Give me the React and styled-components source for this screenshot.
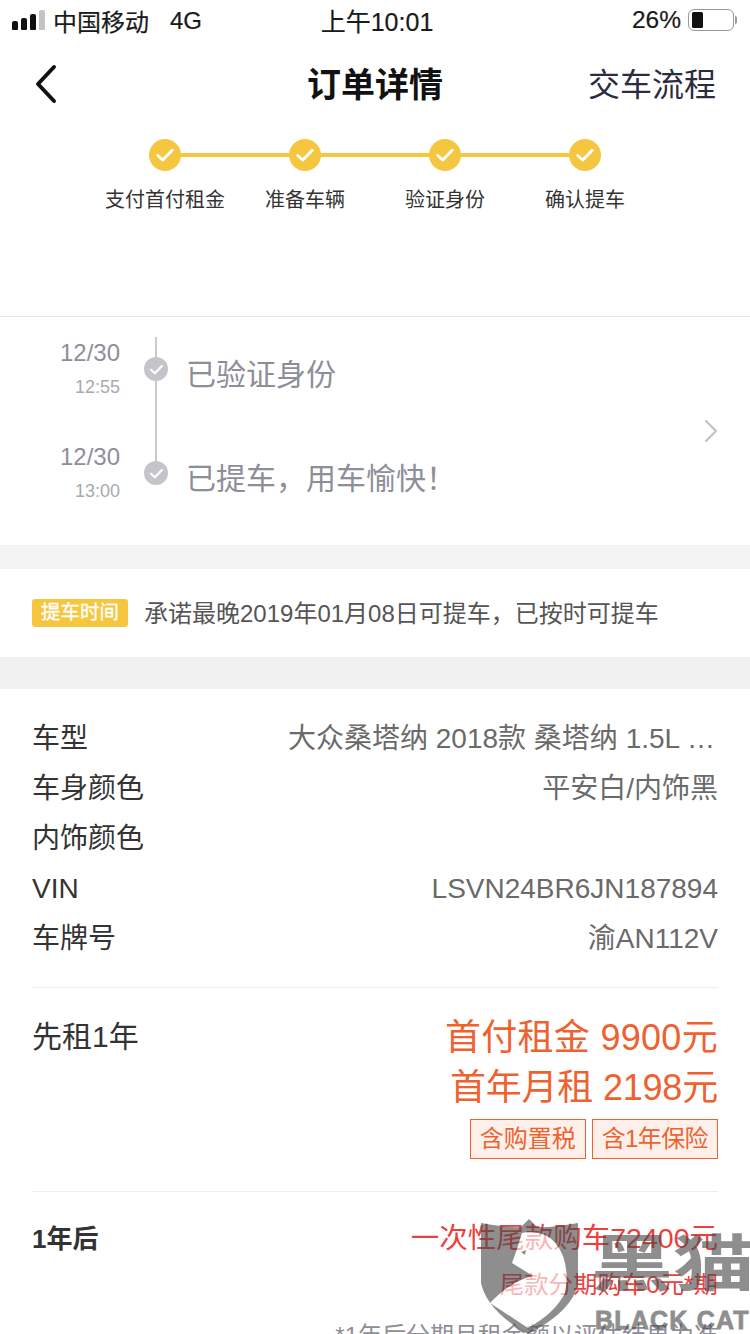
import React from "react";
import styled, { createGlobalStyle } from "styled-components";

const GlobalStyle = createGlobalStyle`
  html, body {
    margin: 0;
    padding: 0;
    background: #fff;
    font-family: "Liberation Sans", "Noto Sans CJK SC", sans-serif;
  }
`;

const STEPS = ["支付首付租金", "准备车辆", "验证身份", "确认提车"];

const TIMELINE = [
  { date: "12/30", time: "12:55", text: "已验证身份" },
  { date: "12/30", time: "13:00", text: "已提车，用车愉快！" },
];

const CAR_INFO = [
  { label: "车型", value: "大众桑塔纳 2018款 桑塔纳 1.5L 手动风尚版" },
  { label: "车身颜色", value: "平安白/内饰黑" },
  { label: "内饰颜色", value: "" },
  { label: "VIN", value: "LSVN24BR6JN187894" },
  { label: "车牌号", value: "渝AN112V" },
];

function CheckMark({ size }) {
  return (
    <svg width={size} height={size} viewBox="0 0 16 16" fill="none">
      <path d="M2.2 8.4 L6.2 12 L13.8 4.2" stroke="#fff" strokeWidth="2.4" strokeLinecap="round" strokeLinejoin="round" />
    </svg>
  );
}

export default function App() {
  return (
    <Page>
      <GlobalStyle />
      <StatusBar>
        <StatusLeft>
          <Signal>
            <Bar $h={9} />
            <Bar $h={12} />
            <Bar $h={16} />
            <Bar $h={20} $off />
          </Signal>
          <span>中国移动</span>
          <NetType>4G</NetType>
        </StatusLeft>
        <StatusTime>上午10:01</StatusTime>
        <StatusRight>
          <span>26%</span>
          <Battery>
            <BatteryFill />
          </Battery>
          <BatteryCap />
        </StatusRight>
      </StatusBar>

      <NavBar>
        <BackIcon width="26" height="40" viewBox="0 0 26 40" fill="none">
          <path d="M21 3 L5 20 L21 37" stroke="#111" strokeWidth="4" strokeLinecap="round" strokeLinejoin="round" />
        </BackIcon>
        <NavTitle>订单详情</NavTitle>
        <NavAction>交车流程</NavAction>
      </NavBar>

      <Steps>
        {STEPS.map((label, i) => (
          <Step key={label}>
            <StepDot $first={i === 0} $last={i === STEPS.length - 1}>
              <Dot>
                <CheckMark size={20} />
              </Dot>
            </StepDot>
            <StepLabel>{label}</StepLabel>
          </Step>
        ))}
      </Steps>

      <TimelineSection>
        <TimelineList>
          {TIMELINE.map((item, i) => (
            <TimelineRow key={item.time}>
              <TimeCol>
                <DateText>{item.date}</DateText>
                <TimeText>{item.time}</TimeText>
              </TimeCol>
              <Rail $last={i === TIMELINE.length - 1}>
                <RailDot>
                  <CheckMark size={15} />
                </RailDot>
              </Rail>
              <TimelineText>{item.text}</TimelineText>
            </TimelineRow>
          ))}
        </TimelineList>
        <Chevron width="14" height="24" viewBox="0 0 14 24" fill="none">
          <path d="M2 2 L12 12 L2 22" stroke="#c4c4ca" strokeWidth="2.4" strokeLinecap="round" strokeLinejoin="round" />
        </Chevron>
      </TimelineSection>

      <Gap $h={24} $bg="#f4f4f4" />

      <PickupRow>
        <PickupTag>提车时间</PickupTag>
        <PickupText>承诺最晚2019年01月08日可提车，已按时可提车</PickupText>
      </PickupRow>

      <Gap $h={32} $bg="#f1f1f1" />

      <InfoList>
        {CAR_INFO.map((row) => (
          <InfoRow key={row.label}>
            <InfoLabel>{row.label}</InfoLabel>
            <InfoValue>{row.value}</InfoValue>
          </InfoRow>
        ))}
      </InfoList>

      <PlanSection>
        <PlanTitle>先租1年</PlanTitle>
        <PlanRight>
          <PriceLine $spacing={0.3}>首付租金 9900元</PriceLine>
          <PriceLine $spacing={-0.2}>首年月租 2198元</PriceLine>
          <Tags>
            <Tag>含购置税</Tag>
            <Tag $tight>含1年保险</Tag>
          </Tags>
        </PlanRight>
      </PlanSection>

      <AfterSection>
        <AfterHead>
          <AfterTitle>1年后</AfterTitle>
          <AfterRight>
            <AfterPrice>一次性尾款购车72400元</AfterPrice>
            <AfterInstall>尾款分期购车0元*期</AfterInstall>
          </AfterRight>
        </AfterHead>
        <AfterNote>*1年后分期月租金额以评估结果为准</AfterNote>
      </AfterSection>

      <Watermark>
        <svg width="97" height="115" viewBox="0 0 97 115">
          <path d="M0 4 Q28 9 40 8 L48 0 L56 8 Q70 9 97 4 L97 64 Q92 92 47 115 Q6 92 0 64 Z" fill="#4a4a4a" />
          <path d="M41 14 L36 30 L31 44 L52 57 Q30 62 9 84 L47 109 Q74 94 84 74 Q88 54 82 37 Q76 22 64 16 Q52 11 41 14 Z" fill="#fff" />
          <path d="M40 33 L45 31 L44 36 Z" fill="#4a4a4a" />
        </svg>
        <WatermarkText>
          <WatermarkCn>黑猫</WatermarkCn>
          <WatermarkEn>BLACK CAT</WatermarkEn>
        </WatermarkText>
      </Watermark>
    </Page>
  );
}

const Page = styled.div`
  position: relative;
  width: 750px;
  height: 1334px;
  overflow: hidden;
  background: #fff;
`;

const StatusBar = styled.div`
  display: grid;
  grid-template-columns: 1fr auto 1fr;
  align-items: center;
  height: 40px;
  font-size: 24px;
  color: #1a1a1a;
  -webkit-text-stroke: 0.2px #1a1a1a;
`;

const StatusLeft = styled.div`
  display: flex;
  align-items: center;
  padding-left: 12px;
`;

const Signal = styled.div`
  display: flex;
  align-items: flex-end;
  gap: 3px;
  height: 20px;
  margin-right: 8px;
`;

const Bar = styled.i`
  display: block;
  width: 6px;
  height: ${(p) => p.$h}px;
  border-radius: 2px 2px 1px 1px;
  background: ${(p) => (p.$off ? "#c4c4c4" : "#111")};
`;

const NetType = styled.span`
  margin-left: 21px;
  padding-top: 2px;
`;

const StatusTime = styled.div`
  padding-left: 4px;
  text-align: center;
  font-size: 25px;
`;

const StatusRight = styled.div`
  display: flex;
  align-items: center;
  justify-content: flex-end;
  padding-right: 13px;
  font-size: 24.5px;
`;

const Battery = styled.div`
  box-sizing: border-box;
  width: 46px;
  height: 22px;
  margin-left: 7px;
  padding: 2px 3px;
  border: 1.5px solid #999;
  border-radius: 6px;
`;

const BatteryFill = styled.div`
  width: 11px;
  height: 100%;
  border-radius: 1.5px;
  background: #111;
`;

const BatteryCap = styled.div`
  width: 2px;
  height: 8px;
  margin-left: 1px;
  background: #999;
  border-radius: 0 2px 2px 0;
`;

const NavBar = styled.div`
  position: relative;
  display: flex;
  align-items: center;
  justify-content: space-between;
  height: 88px;
  padding: 0 34px 0 33px;
`;

const BackIcon = styled.svg`
  display: block;
`;

const NavTitle = styled.div`
  position: absolute;
  left: 0;
  right: 0;
  padding-bottom: 4px;
  text-align: center;
  font-size: 34px;
  font-weight: 700;
  color: #111;
  pointer-events: none;
`;

const NavAction = styled.div`
  padding-bottom: 4px;
  font-size: 32px;
  color: #2c2c40;
`;

const Steps = styled.div`
  display: grid;
  grid-template-columns: repeat(4, 140px);
  justify-content: center;
  height: 189px;
  box-sizing: border-box;
  padding: 11px 0 0;
  border-bottom: 1px solid #e6e6e6;
`;

const Step = styled.div`
  display: flex;
  flex-direction: column;
  align-items: center;
`;

const StepDot = styled.div`
  position: relative;
  align-self: stretch;
  display: flex;
  justify-content: center;

  &::before {
    content: "";
    position: absolute;
    top: 14px;
    left: ${(p) => (p.$first ? "50%" : "0")};
    right: ${(p) => (p.$last ? "50%" : "0")};
    height: 4px;
    background: #f5c63f;
  }
`;

const Dot = styled.div`
  position: relative;
  display: flex;
  align-items: center;
  justify-content: center;
  width: 32px;
  height: 32px;
  border-radius: 50%;
  background: #f5c63f;
`;

const StepLabel = styled.div`
  margin-top: 14px;
  font-size: 20px;
  line-height: 30px;
  white-space: nowrap;
  color: #333;
`;

const TimelineSection = styled.div`
  position: relative;
  height: 228px;
  box-sizing: border-box;
  padding-top: 20px;
`;

const TimelineList = styled.div`
  display: flex;
  flex-direction: column;
`;

const TimelineRow = styled.div`
  display: flex;
  height: 104px;
`;

const TimeCol = styled.div`
  width: 120px;
  text-align: right;
`;

const DateText = styled.div`
  font-size: 24px;
  line-height: 32px;
  color: #8e8e99;
`;

const TimeText = styled.div`
  margin-top: 6px;
  font-size: 18px;
  line-height: 24px;
  color: #a9a9b1;
`;

const Rail = styled.div`
  position: relative;
  width: 24px;
  margin-left: 24px;
  flex-shrink: 0;
  margin-right: 18px;

  &::before {
    content: "";
    position: absolute;
    left: 11px;
    top: 0;
    width: 2px;
    height: ${(p) => (p.$last ? "30px" : "104px")};
    background: #c9c9ce;
  }
`;

const RailDot = styled.div`
  position: absolute;
  top: 20px;
  left: 0;
  display: flex;
  align-items: center;
  justify-content: center;
  width: 24px;
  height: 24px;
  border-radius: 50%;
  background: #c4c4cb;
`;

const TimelineText = styled.div`
  font-size: 30px;
  line-height: 44px;
  margin-top: 16px;
  color: #8e8e99;
`;

const Chevron = styled.svg`
  position: absolute;
  right: 32px;
  top: 102px;
`;

const Gap = styled.div`
  height: ${(p) => p.$h}px;
  background: ${(p) => p.$bg};
`;

const PickupRow = styled.div`
  display: flex;
  align-items: center;
  height: 88px;
  padding-left: 32px;
`;

const PickupTag = styled.div`
  width: 96px;
  height: 28px;
  line-height: 27px;
  border-radius: 3px;
  text-align: center;
  font-size: 19.5px;
  color: #fff;
  background: #f6c63f;
  -webkit-text-stroke: 0.3px #fff;
`;

const PickupText = styled.div`
  margin: 0 0 4px 16px;
  font-size: 24px;
  color: #555;
  white-space: nowrap;
`;

const InfoList = styled.div`
  padding: 25px 32px 0;
`;

const InfoRow = styled.div`
  display: flex;
  justify-content: space-between;
  height: 50px;
  line-height: 50px;
  font-size: 28px;
`;

const InfoLabel = styled.div`
  flex-shrink: 0;
  color: #333;
`;

const InfoValue = styled.div`
  width: 430px;
  text-align: right;
  white-space: nowrap;
  overflow: hidden;
  text-overflow: ellipsis;
  color: #6a6a6a;
`;

const PlanSection = styled.div`
  display: flex;
  justify-content: space-between;
  margin: 23px 32px 0;
  padding-top: 25px;
  height: 204px;
  box-sizing: border-box;
  border-top: 1px solid #eee;
`;

const PlanTitle = styled.div`
  font-size: 30px;
  line-height: 48px;
  color: #333;
`;

const PlanRight = styled.div`
  display: flex;
  flex-direction: column;
  align-items: flex-end;
`;

const PriceLine = styled.div`
  font-size: 36px;
  line-height: 50px;
  letter-spacing: ${(p) => p.$spacing}px;
  color: #ee6230;
`;

const Tags = styled.div`
  display: flex;
  gap: 6px;
  margin-top: 6px;
`;

const Tag = styled.div`
  box-sizing: border-box;
  height: 40px;
  line-height: 38px;
  padding: 0 9px;
  font-size: 24px;
  letter-spacing: ${(p) => (p.$tight ? "-0.6px" : "0")};
  color: #ee6230;
  background: #fdf0ea;
  border: 1px solid #ee6230;
`;

const AfterSection = styled.div`
  margin: 0 32px;
  padding-top: 23px;
  border-top: 1px solid #eee;
`;

const AfterHead = styled.div`
  display: flex;
  justify-content: space-between;
`;

const AfterTitle = styled.div`
  font-size: 26px;
  line-height: 48px;
  font-weight: 700;
  color: #333;
`;

const AfterRight = styled.div`
  text-align: right;
`;

const AfterPrice = styled.div`
  margin-top: -1px;
  font-size: 28.5px;
  line-height: 48px;
  color: #ee3f3f;
`;

const AfterInstall = styled.div`
  margin-top: 4px;
  font-size: 24.4px;
  line-height: 38px;
  color: #ee3f3f;
`;

const AfterNote = styled.div`
  margin-top: 12px;
  text-align: right;
  font-size: 24px;
  color: #8e8e99;
  white-space: nowrap;
`;

const Watermark = styled.div`
  position: absolute;
  left: 481px;
  top: 1219px;
  display: flex;
  gap: 17px;
  opacity: 0.62;
  pointer-events: none;
`;

const WatermarkText = styled.div`
  display: flex;
  flex-direction: column;
  align-items: flex-start;
  padding-top: 15px;
`;

const WatermarkCn = styled.div`
  height: 72px;
  margin-left: -4px;
  font-size: 82px;
  line-height: 82px;
  font-weight: 700;
  white-space: nowrap;
  color: #4a4a4a;
  transform: scaleY(0.75);
  transform-origin: left top;
`;

const WatermarkEn = styled.div`
  font-size: 25px;
  line-height: 28px;
  font-weight: 700;
  letter-spacing: 1.2px;
  white-space: nowrap;
  color: #4a4a4a;
  -webkit-text-stroke: 0.8px #4a4a4a;
`;
